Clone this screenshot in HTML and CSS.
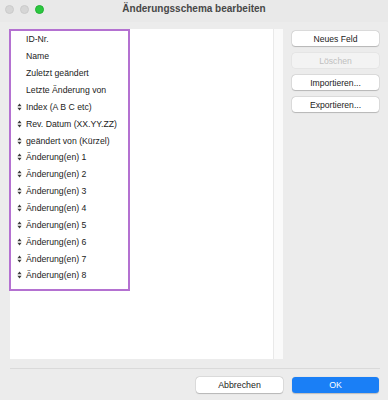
FILE: index.html
```html
<!DOCTYPE html>
<html lang="de">
<head>
<meta charset="utf-8">
<title>Änderungsschema bearbeiten</title>
<link rel="stylesheet" href="styles.css">
</head>
<body>
<div class="window">
  <div class="titlebar">
    <div class="lights">
      <span class="light off"></span>
      <span class="light off"></span>
      <span class="light green"></span>
    </div>
    <div class="title">Änderungsschema bearbeiten</div>
  </div>
  <div class="main">
    <div class="list">
      <div class="list-body">
        <div class="highlight">
          <div class="row"><span class="handle"></span><span class="label">ID-Nr.</span></div>
          <div class="row"><span class="handle"></span><span class="label">Name</span></div>
          <div class="row"><span class="handle"></span><span class="label">Zuletzt geändert</span></div>
          <div class="row"><span class="handle"></span><span class="label">Letzte Änderung von</span></div>
          <div class="row"><span class="handle"><svg viewBox="0 0 5 8" width="5" height="8"><path d="M2.5 0.5 L4.6 3.2 H0.4 Z M2.5 7.5 L4.6 4.8 H0.4 Z" fill="#3c3c3c"/></svg></span><span class="label">Index (A B C etc)</span></div>
          <div class="row"><span class="handle"><svg viewBox="0 0 5 8" width="5" height="8"><path d="M2.5 0.5 L4.6 3.2 H0.4 Z M2.5 7.5 L4.6 4.8 H0.4 Z" fill="#3c3c3c"/></svg></span><span class="label">Rev. Datum (XX.YY.ZZ)</span></div>
          <div class="row"><span class="handle"><svg viewBox="0 0 5 8" width="5" height="8"><path d="M2.5 0.5 L4.6 3.2 H0.4 Z M2.5 7.5 L4.6 4.8 H0.4 Z" fill="#3c3c3c"/></svg></span><span class="label">geändert von (Kürzel)</span></div>
          <div class="row"><span class="handle"><svg viewBox="0 0 5 8" width="5" height="8"><path d="M2.5 0.5 L4.6 3.2 H0.4 Z M2.5 7.5 L4.6 4.8 H0.4 Z" fill="#3c3c3c"/></svg></span><span class="label">Änderung(en) 1</span></div>
          <div class="row"><span class="handle"><svg viewBox="0 0 5 8" width="5" height="8"><path d="M2.5 0.5 L4.6 3.2 H0.4 Z M2.5 7.5 L4.6 4.8 H0.4 Z" fill="#3c3c3c"/></svg></span><span class="label">Änderung(en) 2</span></div>
          <div class="row"><span class="handle"><svg viewBox="0 0 5 8" width="5" height="8"><path d="M2.5 0.5 L4.6 3.2 H0.4 Z M2.5 7.5 L4.6 4.8 H0.4 Z" fill="#3c3c3c"/></svg></span><span class="label">Änderung(en) 3</span></div>
          <div class="row"><span class="handle"><svg viewBox="0 0 5 8" width="5" height="8"><path d="M2.5 0.5 L4.6 3.2 H0.4 Z M2.5 7.5 L4.6 4.8 H0.4 Z" fill="#3c3c3c"/></svg></span><span class="label">Änderung(en) 4</span></div>
          <div class="row"><span class="handle"><svg viewBox="0 0 5 8" width="5" height="8"><path d="M2.5 0.5 L4.6 3.2 H0.4 Z M2.5 7.5 L4.6 4.8 H0.4 Z" fill="#3c3c3c"/></svg></span><span class="label">Änderung(en) 5</span></div>
          <div class="row"><span class="handle"><svg viewBox="0 0 5 8" width="5" height="8"><path d="M2.5 0.5 L4.6 3.2 H0.4 Z M2.5 7.5 L4.6 4.8 H0.4 Z" fill="#3c3c3c"/></svg></span><span class="label">Änderung(en) 6</span></div>
          <div class="row"><span class="handle"><svg viewBox="0 0 5 8" width="5" height="8"><path d="M2.5 0.5 L4.6 3.2 H0.4 Z M2.5 7.5 L4.6 4.8 H0.4 Z" fill="#3c3c3c"/></svg></span><span class="label">Änderung(en) 7</span></div>
          <div class="row"><span class="handle"><svg viewBox="0 0 5 8" width="5" height="8"><path d="M2.5 0.5 L4.6 3.2 H0.4 Z M2.5 7.5 L4.6 4.8 H0.4 Z" fill="#3c3c3c"/></svg></span><span class="label">Änderung(en) 8</span></div>
        </div>
      </div>
      <div class="scrolltrack"></div>
    </div>
    <div class="side">
      <button class="btn">Neues Feld</button>
      <button class="btn disabled">Löschen</button>
      <button class="btn">Importieren...</button>
      <button class="btn">Exportieren...</button>
    </div>
  </div>
  <div class="separator"></div>
  <div class="footer">
    <button class="btn wide">Abbrechen</button>
    <button class="btn wide primary">OK</button>
  </div>
</div>
</body>
</html>
```
FILE: styles.css
```css
* { box-sizing: border-box; }
html, body {
  margin: 0;
  padding: 0;
  background: #ececec;
}
body {
  font-family: "Liberation Sans", Arial, sans-serif;
  color: #262626;
}
.window {
  width: 388px;
  height: 400px;
  display: flex;
  flex-direction: column;
  background: #ececec;
}
.titlebar {
  height: 22px;
  display: flex;
  align-items: center;
  position: relative;
  background: #e9e9e9;
}
.lights {
  display: flex;
  gap: 6px;
  padding-left: 5px;
  margin-top: -4px;
}
.light {
  width: 9px;
  height: 9px;
  border-radius: 50%;
}
.light.off { background: #d6d6d6; border: 0.5px solid #cbcbcb; }
.light.green { background: #2bc840; border: 0.5px solid #22b034; }
.title {
  position: absolute;
  left: 0;
  right: 0;
  top: 3px;
  text-align: center;
  font-size: 10px;
  font-weight: bold;
  color: #474747;
  pointer-events: none;
}
.main {
  display: flex;
  gap: 9px;
  padding: 7px 9px 0 10px;
}
.list {
  width: 273px;
  height: 330px;
  background: #ffffff;
  display: flex;
}
.list-body {
  flex: 1;
}
.scrolltrack {
  width: 10px;
  background: #fafafa;
  border-left: 1px solid #e9e9e9;
}
.highlight {
  width: 121px;
  margin-left: -1px;
  border: 2px solid #b471d1;
  padding-bottom: 5px;
}
.row {
  height: 16.86px;
  display: flex;
  align-items: center;
  font-size: 8.7px;
  color: #222222;
}
.handle {
  width: 15px;
  display: flex;
  justify-content: center;
  padding-left: 1px;
}
.handle svg { display: block; }
.label { white-space: nowrap; }
.side {
  width: 87px;
  display: flex;
  flex-direction: column;
  gap: 7px;
  padding-top: 2px;
}
.btn {
  font-family: "Liberation Sans", Arial, sans-serif;
  font-size: 8.6px;
  color: #222222;
  height: 15px;
  padding: 0;
  border: none;
  border-radius: 3.5px;
  background: #ffffff;
  box-shadow: 0 0 0 0.5px rgba(0,0,0,0.12), 0 0.5px 1px rgba(0,0,0,0.18);
  width: 100%;
}
.btn.disabled {
  background: #f3f3f3;
  color: #c0c0c0;
  box-shadow: 0 0 0 0.5px rgba(0,0,0,0.06);
}
.separator {
  height: 1px;
  background: #dadada;
  margin: 9px 8px 0 10px;
}
.footer {
  display: flex;
  justify-content: flex-end;
  gap: 9px;
  padding: 8px 9px 0 0;
}
.btn.wide {
  width: 87px;
  height: 16px;
  font-size: 8.8px;
}
.btn.primary {
  background: #1a7ff6;
  color: #ffffff;
  box-shadow: 0 0.5px 1px rgba(0,0,0,0.2);
}
```
